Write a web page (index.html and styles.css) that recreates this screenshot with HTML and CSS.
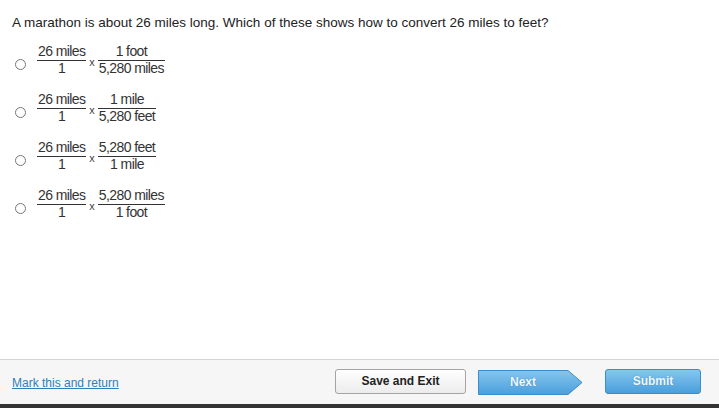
FILE: index.html
```html
<!DOCTYPE html>
<html>
<head>
<meta charset="utf-8">
<link rel="stylesheet" href="styles.css">
</head>
<body>
<div class="page">
  <main class="content">
    <p class="question">A marathon is about 26 miles long. Which of these shows how to convert 26 miles to feet?</p>
    <div class="options">
      <label class="option">
        <span class="radio"></span>
        <span class="frac"><span class="num">26 miles</span><span class="den">1</span></span>
        <span class="times">x</span>
        <span class="frac"><span class="num">1 foot</span><span class="den">5,280 miles</span></span>
      </label>
      <label class="option">
        <span class="radio"></span>
        <span class="frac"><span class="num">26 miles</span><span class="den">1</span></span>
        <span class="times">x</span>
        <span class="frac"><span class="num">1 mile</span><span class="den">5,280 feet</span></span>
      </label>
      <label class="option">
        <span class="radio"></span>
        <span class="frac"><span class="num">26 miles</span><span class="den">1</span></span>
        <span class="times">x</span>
        <span class="frac"><span class="num">5,280 feet</span><span class="den">1 mile</span></span>
      </label>
      <label class="option">
        <span class="radio"></span>
        <span class="frac"><span class="num">26 miles</span><span class="den">1</span></span>
        <span class="times">x</span>
        <span class="frac"><span class="num">5,280 miles</span><span class="den">1 foot</span></span>
      </label>
    </div>
  </main>
  <footer class="footer">
    <a class="mark" href="#">Mark this and return</a>
    <div class="actions">
      <button class="btn save">Save and Exit</button>
      <button class="next">
        <svg class="next-shape" width="105" height="25" viewBox="0 0 105 25">
          <defs>
            <linearGradient id="g" x1="0" y1="0" x2="0" y2="1">
              <stop offset="0" stop-color="#86c6ee"/>
              <stop offset="1" stop-color="#4a9fdc"/>
            </linearGradient>
          </defs>
          <polygon points="0.5,0.5 90,0.5 104,12.5 90,24.5 0.5,24.5" fill="url(#g)" stroke="#3b8ccb" stroke-width="1"/>
        </svg>
        <span class="next-label">Next</span>
      </button>
      <button class="btn submit">Submit</button>
    </div>
  </footer>
  <div class="bottom-bar"></div>
</div>
</body>
</html>
```
FILE: styles.css
```css
* { box-sizing: border-box; }
html, body { margin: 0; padding: 0; background: #fff; }
body { font-family: "Liberation Sans", Arial, sans-serif; color: #222; }
.page { width: 719px; height: 408px; display: flex; flex-direction: column; overflow: hidden; }
.content { height: 359px; padding: 15px 12px 0 12px; }
.question { margin: 0; font-size: 13.5px; line-height: 16px; color: #222; }
.options { display: flex; flex-direction: column; padding-top: 5px; }
.option { display: flex; align-items: center; height: 48px; }
.radio { width: 11px; height: 11px; border: 1px solid #777; border-radius: 50%; margin: 9px 11px 0 3px; background: #fff; }
.frac { display: flex; flex-direction: column; align-items: stretch; font-size: 14px; letter-spacing: -0.6px; color: #333; }
.num { text-align: center; line-height: 15px; padding: 0 1px 1px; border-bottom: 1px solid #333; }
.den { text-align: center; line-height: 15px; padding: 0 1px 0; }
.times { font-size: 11px; color: #444; margin: 4px 3px 0 3px; line-height: 11px; }
.footer { height: 45px; border-top: 1px solid #d4d4d4; background: #f6f6f6; display: flex; align-items: center; padding: 0 18px 0 12px; }
.mark { font-size: 12px; color: #2f7fb8; text-decoration: underline; margin-top: 2px; }
.actions { margin-left: auto; display: flex; align-items: center; }
.btn { font-family: "Liberation Sans", Arial, sans-serif; font-size: 12px; font-weight: bold; height: 25px; border-radius: 3px; cursor: pointer; padding: 0; }
.save { width: 131px; color: #222; border: 1px solid #a4a4a4; background: linear-gradient(#ffffff, #ececec); margin-top: -2px; }
.next { position: relative; width: 105px; height: 25px; margin-left: 12px; border: 0; padding: 0; background: transparent; cursor: pointer; margin-top: 1px; }
.next-shape { position: absolute; left: 0; top: 0; display: block; }
.next-label { position: relative; display: block; width: 90px; text-align: center; font-family: "Liberation Sans", Arial, sans-serif; font-size: 12px; font-weight: bold; line-height: 25px; color: #f2f8fd; text-shadow: 0 0 1px #2f7fbf; }
.submit { width: 96px; margin-left: 22px; color: #f2f8fd; border: 1px solid #3b8ccb; background: linear-gradient(#86c6ee, #4a9fdc); text-shadow: 0 0 1px #2f7fbf; margin-top: -2px; }
.bottom-bar { height: 4px; background: #333; }
```
